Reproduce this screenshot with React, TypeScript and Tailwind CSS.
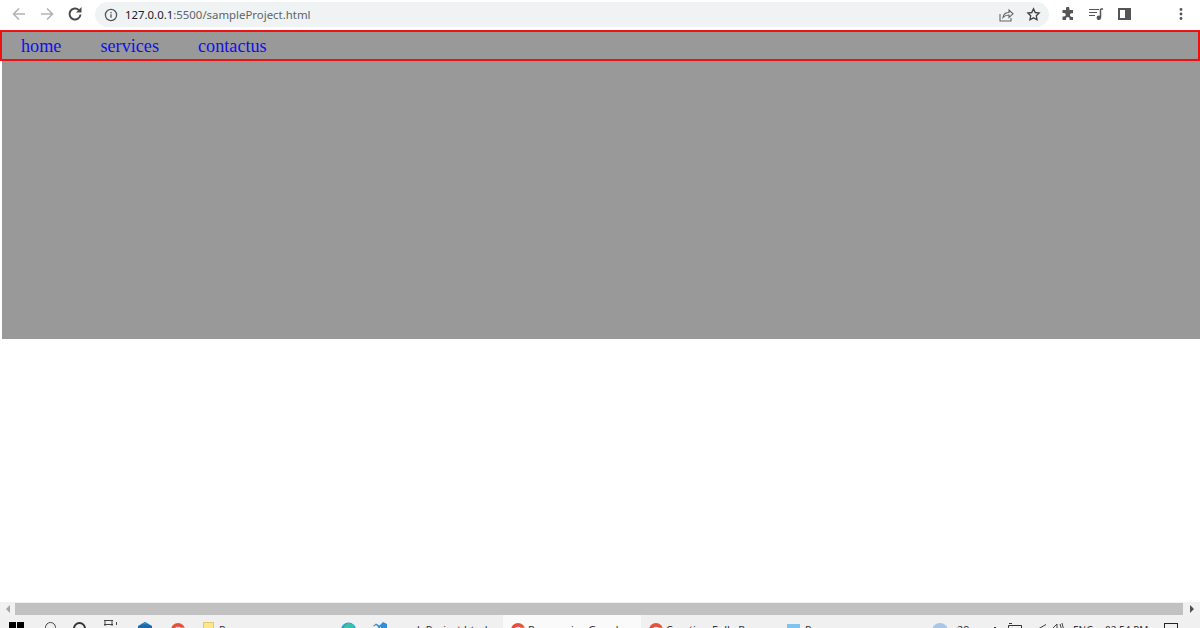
import React from "react";

const Chrome = () => (
  <svg width="14" height="14" viewBox="0 0 14 14" className="shrink-0">
    <circle cx="7" cy="7" r="7" fill="#e4513f" />
    <path d="M7 4.500 13.500 4.500A7 7 0 0 1 9 13.700Z" fill="#f0c23c" />
    <circle cx="7" cy="7" r="3.200" fill="#fff" />
    <circle cx="7" cy="7" r="2.500" fill="#4a86e8" />
  </svg>
);

export default function App() {
  return (
    <div className="w-[1200px] h-[628px] overflow-hidden bg-white flex flex-col font-['Noto_Sans',sans-serif]">
      <div className="h-[30px] shrink-0 bg-white flex items-start pt-[2px]">
        <svg width="16" height="16" viewBox="0 0 16 16" fill="none" stroke="#b3b3b3" strokeWidth="1.6" className="ml-[11px] mt-[4px]">
          <path d="M14 8H2.500M8 2.500 2.500 8 8 13.500" />
        </svg>
        <svg width="16" height="16" viewBox="0 0 16 16" fill="none" stroke="#b3b3b3" strokeWidth="1.6" className="ml-[12px] mt-[4px]">
          <path d="M2 8h11.500M8 2.500 13.500 8 8 13.500" />
        </svg>
        <svg width="16" height="16" viewBox="0 0 16 16" fill="none" stroke="#4a4a4a" strokeWidth="2" className="ml-[12px] mt-[4px]">
          <path d="M13.500 8.500a5.500 5.500 0 1 1-1.600-4.400" />
          <path d="M14.500 1v5.500H9Z" fill="#4a4a4a" stroke="none" />
        </svg>
        <div className="ml-[12px] w-[954px] h-[25px] rounded-full bg-[#eff3f4] flex items-center">
          <svg width="14" height="14" viewBox="0 0 14 14" fill="none" stroke="#555" strokeWidth="1.3" className="ml-[9px]">
            <circle cx="7" cy="7" r="5.600" />
            <path d="M7 6.200v3.600M7 4v1.300" />
          </svg>
          <span className="ml-[7px] text-[11.4px] text-[#5f6368] whitespace-nowrap">
            <span className="text-[#202124]">127.0.0.1</span>:5500/sampleProject.html
          </span>
          <svg width="16" height="16" viewBox="0 0 16 16" fill="none" stroke="#666" strokeWidth="1.1" className="ml-auto mr-[12px]">
            <path d="M2 7v7h11v-3M5 10.500c.5-3.500 3-5 6-5V3l4 3.800-4 3.600V8c-2.500 0-4.500.8-6 2.500Z" />
          </svg>
          <svg width="15" height="15" viewBox="0 0 24 24" fill="none" stroke="#444" strokeWidth="2.2" className="mr-[8px]">
            <path d="m12 3 2.800 5.800 6.200.9-4.500 4.400 1.100 6.300-5.600-3-5.600 3 1.100-6.300L3 9.700l6.200-.9Z" />
          </svg>
        </div>
        <svg width="14" height="14" viewBox="0 0 14 14" fill="#555" className="ml-[12px] mt-[5px]">
          <path d="M5 1.500a1.700 1.700 0 0 1 3.400 0V3H12v3.300h-1.300a1.800 1.800 0 0 0 0 3.600H12V13H8.600v-1.200a1.800 1.800 0 0 0-3.600 0V13H1.500V9.500H3a1.800 1.800 0 0 0 0-3.600H1.500V3H5Z" />
        </svg>
        <svg width="16" height="14" viewBox="0 0 16 14" fill="none" stroke="#555" strokeWidth="1.1" className="ml-[13px] mt-[5px]">
          <path d="M1 2.500h10M1 5.500h8M1 8.500h6" />
          <path d="M12.500 2v8.500" strokeWidth="1.500" />
          <path d="M12.500 2H15" strokeWidth="1.500" />
          <circle cx="10.800" cy="10.800" r="1.700" fill="#555" />
        </svg>
        <div className="ml-[14px] mt-[6px] w-[13px] h-[12px] border-2 border-[#555] flex justify-end">
          <div className="w-[4px] h-full bg-[#555]" />
        </div>
        <svg width="4" height="14" viewBox="0 0 4 14" fill="#555" className="ml-[48px] mt-[5px]">
          <circle cx="2" cy="2.500" r="1.400" />
          <circle cx="2" cy="7" r="1.400" />
          <circle cx="2" cy="11.500" r="1.400" />
        </svg>
      </div>

      <div className="h-[309px] shrink-0 ml-[2px] bg-[#999999]">
        <nav className="-ml-[2px] w-[1200px] h-[31px] border-2 border-[#ee1111] bg-[#999999] flex items-center pl-[19px] pt-[1px] gap-[39px] font-['Liberation_Serif',serif] text-[18.2px] text-[#0f0fe8] leading-none">
          <a>home</a>
          <a>services</a>
          <a>contactus</a>
        </nav>
      </div>

      <div className="flex-1" />

      <div className="h-[13px] shrink-0 bg-[#f1f1f1] flex items-end">
        <div className="w-[15px] h-[12px] flex justify-center items-center">
          <div className="w-0 h-0 border-y-[4px] border-y-transparent border-r-[4px] border-r-[#a3a3a3]" />
        </div>
        <div className="w-[1168px] h-[12px] bg-[#c1c1c1]" />
        <div className="w-[17px] h-[12px] flex justify-center items-center">
          <div className="w-0 h-0 border-y-[4px] border-y-transparent border-l-[4px] border-l-[#505050]" />
        </div>
      </div>

      <div className="h-[13px] shrink-0 bg-[#f0f0f0] overflow-hidden flex items-start text-[10.8px] text-[#333] whitespace-nowrap leading-[16px] pt-[7px]">
        <div className="ml-[9px] w-[15px] h-[15px] shrink-0 grid grid-cols-2 gap-[1px]">
          <div className="bg-black" /><div className="bg-black" /><div className="bg-black" /><div className="bg-black" />
        </div>
        <div className="ml-[21px] w-[11px] h-[11px] rounded-full border border-[#444] shrink-0" />
        <div className="ml-[17px] w-[13px] h-[13px] rounded-full border-2 border-[#333] shrink-0" />
        <svg width="15" height="6" viewBox="0 0 15 6" fill="none" stroke="#444" className="ml-[17px] -mt-[2px] shrink-0">
          <path d="M1 .5h9M1 4.500h9M2 .5V6M9 .5V6M13.500 2v3" />
        </svg>
        <svg width="14" height="8" viewBox="0 0 14 8" className="ml-[20px] shrink-0">
          <path d="M7 0 14 4v4H0V4Z" fill="#1c6ba8" />
          <path d="M7 0 11 2.300H3Z" fill="#2d8fd5" />
        </svg>
        <div className="ml-[19px] mt-[1px] shrink-0"><Chrome /></div>
        <div className="ml-[18px] w-[11px] h-[12px] bg-[#fde68a] border border-[#e3c873] shrink-0" />
        <span className="ml-[5px] w-[122px] shrink-0">Pro</span>
        <svg width="15" height="8" viewBox="0 0 15 8" className="shrink-0">
          <path d="M0 8A7.500 7.500 0 0 1 15 8Z" fill="#27a3c4" />
          <path d="M3 8A5 5 0 0 1 13 5L15 8Z" fill="#38c3b0" />
        </svg>
        <svg width="15" height="8" viewBox="0 0 15 8" fill="#2f8fd8" className="ml-[16px] shrink-0">
          <path d="M11 0 15 2v6H9V4.500L6 8H3L6.500 5 4 3 2 4.500 1 4 4 1.500 7.500 3.500Z" />
        </svg>
        <span className="ml-[2px] w-[114px] shrink-0">sampleProject.html</span>
        <div className="w-[138px] h-[16px] -mt-[7px] pt-[7px] bg-[#fafafa] flex shrink-0">
          <div className="ml-[8px] mt-[1px]"><Chrome /></div>
          <span className="ml-[3px]">Responsive Google</span>
        </div>
        <div className="ml-[8px] mt-[1px] shrink-0"><Chrome /></div>
        <span className="ml-[3px] w-[121px] shrink-0">Creating Fully Resp</span>
        <div className="mt-[2px] w-[13px] h-[10px] bg-[#7fc4ee] shrink-0" />
        <span className="ml-[5px] w-[127px] shrink-0">Pro</span>
        <div className="mt-[1px] w-[16px] h-[16px] rounded-full bg-[#a9c6e6] shrink-0" />
        <span className="ml-[9px] w-[34px] shrink-0">29</span>
        <svg width="8" height="6" viewBox="0 0 8 6" fill="none" stroke="#333" className="mt-[3px] shrink-0">
          <path d="M2 4 4 2l2 2" />
        </svg>
        <svg width="14" height="6" viewBox="0 0 14 6" fill="none" stroke="#333" className="ml-[9px] mt-[1px] shrink-0">
          <path d="M.5 6V2.500h13V6M1 .5h3" />
        </svg>
        <svg width="9" height="6" viewBox="0 0 9 6" fill="none" stroke="#444" className="ml-[15px] mt-[2px] shrink-0">
          <path d="M9 .5 1 5l4 1" />
        </svg>
        <svg width="12" height="6" viewBox="0 0 12 6" fill="none" stroke="#444" className="ml-[6px] mt-[1px] shrink-0">
          <path d="M0 6 5 1v5M8 1l1.500 5M10 0l1.500 6" />
        </svg>
        <span className="ml-[9px] w-[21px] shrink-0 text-[10px]">ENG</span>
        <span className="ml-[11px] w-[43px] shrink-0 text-[10px]">02:54 PM</span>
        <div className="ml-[16px] mt-[1px] w-[14px] h-[14px] border border-[#222] shrink-0" />
      </div>
    </div>
  );
}
